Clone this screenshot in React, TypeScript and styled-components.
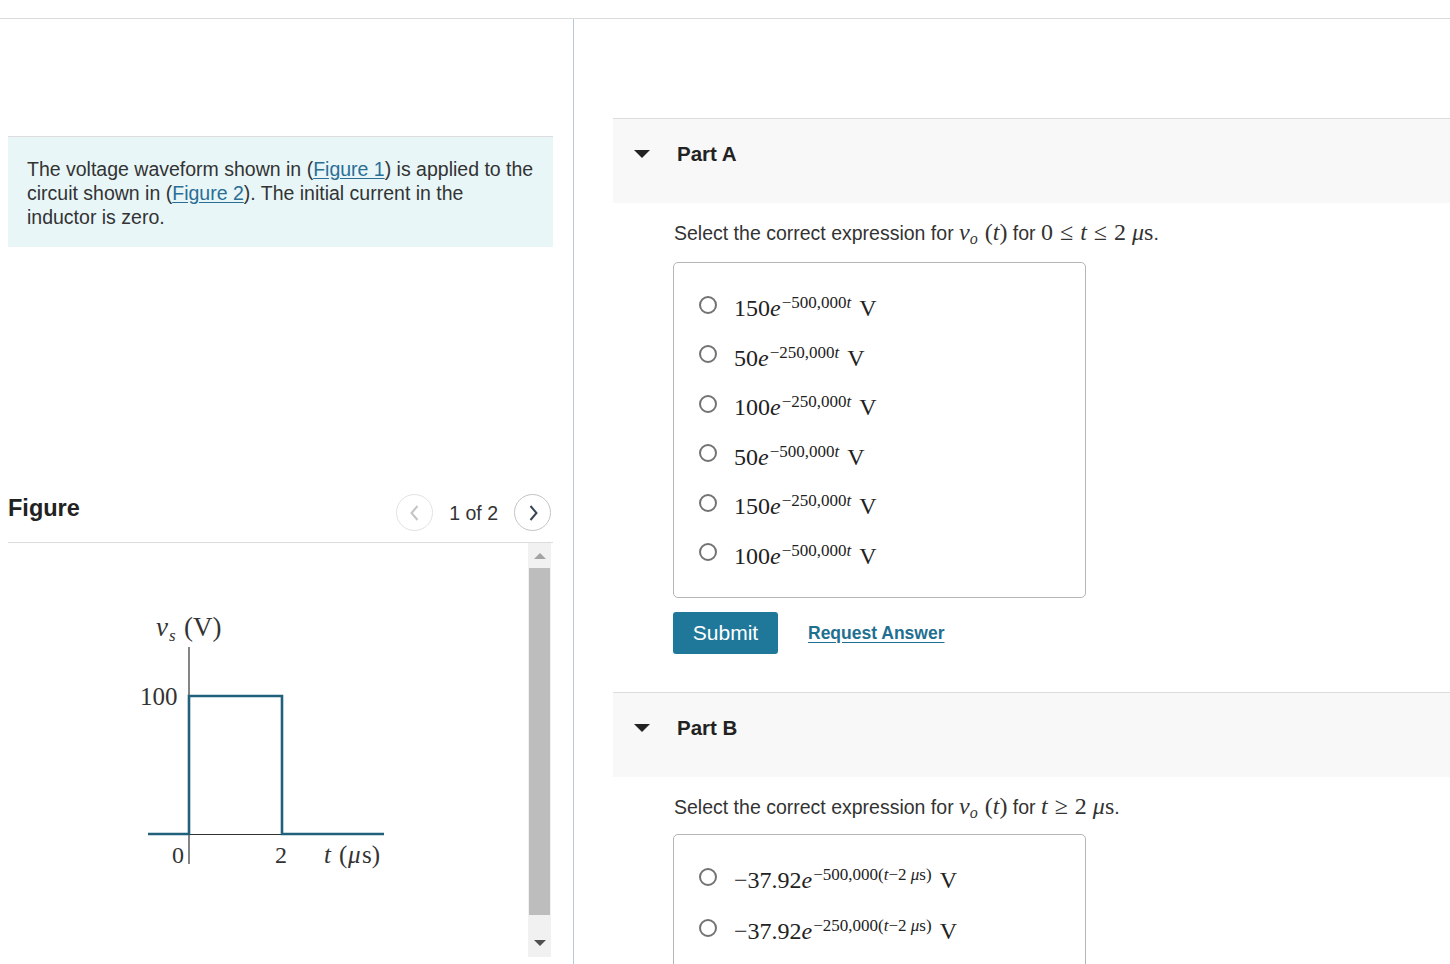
import React from "react";
import styled, { createGlobalStyle } from "styled-components";

const Global = createGlobalStyle`
  html, body { margin: 0; padding: 0; background: #fff; }
  body { font-family: "Liberation Sans", Arial, sans-serif; color: #333; }
  * { box-sizing: border-box; }
`;

const Page = styled.div`
  display: flex;
  flex-direction: column;
  height: 100vh;
  overflow: hidden;
`;

const TopBar = styled.div`
  height: 19px;
  flex: 0 0 19px;
  border-bottom: 1px solid #dcdcdc;
`;

const Columns = styled.div`
  flex: 1;
  display: flex;
  min-height: 0;
`;

const LeftPane = styled.div`
  width: 574px;
  flex: 0 0 574px;
  border-right: 1px solid #b9c8da;
  padding: 117px 20px 0 8px;
  display: flex;
  flex-direction: column;
  overflow: hidden;
`;

const InfoBox = styled.div`
  background: #e8f6f8;
  border-top: 1px solid #dcdcdc;
  padding: 20px 18px 18px 19px;
  font-size: 19.5px;
  line-height: 24px;
  color: #333;
`;

const Link = styled.a`
  color: #2a6e96;
  text-decoration: underline;
  text-underline-offset: 2px;
`;

const FigureHeader = styled.div`
  margin-top: 246px;
  height: 50px;
  flex: 0 0 50px;
  display: flex;
  align-items: flex-start;
  justify-content: space-between;
  border-bottom: 1px solid #dcdcdc;
  padding-right: 2px;
`;

const FigureTitle = styled.h2`
  margin: 0;
  font-size: 23.5px;
  line-height: 31px;
  font-weight: bold;
  color: #222;
`;

const Nav = styled.div`
  display: flex;
  align-items: center;
  gap: 16px;
  padding-top: 1px;
`;

const NavButton = styled.button<{ $disabled?: boolean }>`
  width: 37px;
  height: 37px;
  border-radius: 50%;
  border: 1px solid ${(p) => (p.$disabled ? "#e2e2e2" : "#c4c4c4")};
  background: #fff;
  display: flex;
  align-items: center;
  justify-content: center;
  padding: 0;
  color: ${(p) => (p.$disabled ? "#c4c4c4" : "#3a4655")};
`;

const NavText = styled.span`
  font-size: 19.5px;
  line-height: 24px;
  color: #333;
`;

const FigureBody = styled.div`
  height: 414px;
  flex: 0 0 414px;
  display: flex;
  padding-right: 2px;
`;

const GraphArea = styled.div`
  flex: 1;
`;

const Scrollbar = styled.div`
  width: 23px;
  background: #f1f1f1;
  display: flex;
  flex-direction: column;
  align-items: center;
`;

const ScrollArrow = styled.div<{ $down?: boolean }>`
  height: 25px;
  width: 100%;
  display: flex;
  align-items: center;
  justify-content: center;
  ${(p) => (p.$down ? "margin-top: auto; margin-bottom: 2px;" : "")}
  &::before {
    content: "";
    border-left: 6px solid transparent;
    border-right: 6px solid transparent;
    ${(p) =>
      p.$down
        ? "border-top: 6px solid #505050;"
        : "border-bottom: 6px solid #a3a3a3;"}
  }
`;

const ScrollThumb = styled.div`
  width: 21px;
  flex: 0 0 347px;
  background: #bdbdbd;
`;

const RightPane = styled.div`
  flex: 1;
  padding: 99px 0 0 39px;
  overflow: hidden;
`;

const PartHeader = styled.div`
  height: 85px;
  border-top: 1px solid #dcdcdc;
  background: #f8f8f8;
  display: flex;
  align-items: flex-start;
  padding: 23px 0 0 21px;
  gap: 27px;
`;

const Caret = styled.span`
  margin-top: 8px;
  width: 0;
  height: 0;
  border-left: 8px solid transparent;
  border-right: 8px solid transparent;
  border-top: 8px solid #222;
`;

const PartTitle = styled.h3`
  margin: 0;
  font-size: 20.5px;
  line-height: 24px;
  font-weight: bold;
  color: #222;
`;

const Question = styled.p`
  margin: 16px 0 0 61px;
  font-size: 19.5px;
  line-height: 26px;
  color: #333;
`;

const M = styled.span`
  font-family: "Liberation Serif", "Times New Roman", serif;
  font-size: 24px;
`;

const MI = styled.i`
  font-family: "Liberation Serif", "Times New Roman", serif;
  font-style: italic;
`;

const Rel = styled.span`
  margin: 0 7px;
`;

const Sub = styled.span`
  font-size: 16px;
  font-style: italic;
  vertical-align: -4px;
  margin-right: 7px;
`;

const OptionsBox = styled.div<{ $pt: number; $pb: number; $mt: number }>`
  margin: ${(p) => p.$mt}px 0 0 60px;
  width: 413px;
  border: 1px solid #b5b5b5;
  border-radius: 5px;
  padding: ${(p) => p.$pt}px 0 ${(p) => p.$pb}px;
`;

const OptionRow = styled.label<{ $h: number }>`
  height: ${(p) => p.$h}px;
  display: flex;
  align-items: center;
  padding-left: 25px;
  gap: 17px;
`;

const Radio = styled.span`
  width: 18px;
  height: 18px;
  flex: 0 0 18px;
  border: 2px solid #737373;
  border-radius: 50%;
  background: #fff;
`;

const Expr = styled.span`
  font-family: "Liberation Serif", "Times New Roman", serif;
  font-size: 24px;
  color: #222;
  white-space: nowrap;
  padding-top: 6px;
`;

const Sup = styled.span`
  font-size: 17px;
  vertical-align: 8px;
  margin-left: 1px;
`;

const Unit = styled.span`
  margin-left: 8px;
`;

const Actions = styled.div`
  margin: 14px 0 0 60px;
  display: flex;
  align-items: center;
  gap: 30px;
`;

const SubmitButton = styled.button`
  width: 105px;
  height: 42px;
  border: none;
  border-radius: 3px;
  background: #1f7899;
  color: #fff;
  font-family: "Liberation Sans", Arial, sans-serif;
  font-size: 21px;
`;

const RequestLink = styled.a`
  font-size: 17.5px;
  font-weight: bold;
  color: #1f6f91;
  text-decoration: underline;
  text-underline-offset: 3px;
`;

const PartBlock = styled.section<{ $mt: number }>`
  margin-top: ${(p) => p.$mt}px;
`;

const ChevronLeft = () => (
  <svg width="16" height="20" viewBox="0 0 16 20">
    <path d="M10.5 3 L4.5 10 L10.5 17" fill="none" stroke="currentColor" strokeWidth="2" />
  </svg>
);
const ChevronRight = () => (
  <svg width="16" height="20" viewBox="0 0 16 20">
    <path d="M5.5 3 L11.5 10 L5.5 17" fill="none" stroke="currentColor" strokeWidth="2" />
  </svg>
);

const Graph = () => (
  <svg width="518" height="413" viewBox="0 0 518 413">
    <g fontFamily="'Liberation Serif', 'Times New Roman', serif" fill="#333">
      <text x="148" y="93" fontSize="27" fontStyle="italic">v</text>
      <text x="161" y="98" fontSize="17" fontStyle="italic">s</text>
      <text x="176" y="93" fontSize="27">(V)</text>
      <text x="132" y="162" fontSize="25">100</text>
      <text x="164" y="320" fontSize="24">0</text>
      <text x="267" y="320" fontSize="24">2</text>
      <text x="316" y="320" fontSize="25" fontStyle="italic">t</text>
      <text x="331" y="320" fontSize="25">(</text>
      <text x="340" y="320" fontSize="25" fontStyle="italic">μ</text>
      <text x="354" y="320" fontSize="25">s)</text>
    </g>
    <line x1="181" y1="104" x2="181" y2="321" stroke="#333" strokeWidth="1.2" />
    <line x1="181" y1="291.5" x2="274" y2="291.5" stroke="#333" strokeWidth="1.2" />
    <polyline
      points="140,291 181,291 181,153 274,153 274,291 376,291"
      fill="none"
      stroke="#22617b"
      strokeWidth="2.6"
    />
  </svg>
);

type Opt = { coef: string; exp: string };

const partA: Opt[] = [
  { coef: "150", exp: "500,000" },
  { coef: "50", exp: "250,000" },
  { coef: "100", exp: "250,000" },
  { coef: "50", exp: "500,000" },
  { coef: "150", exp: "250,000" },
  { coef: "100", exp: "500,000" },
];

const OptionA = ({ o }: { o: Opt }) => (
  <OptionRow $h={49.5}>
    <Radio />
    <Expr>
      {o.coef}
      <i>e</i>
      <Sup>
        −{o.exp}
        <i>t</i>
      </Sup>
      <Unit>V</Unit>
    </Expr>
  </OptionRow>
);

const OptionB = ({ rate }: { rate: string }) => (
  <OptionRow $h={51}>
    <Radio />
    <Expr>
      −37.92<i>e</i>
      <Sup>
        −{rate}(<i>t</i>−2 <i>μ</i>s)
      </Sup>
      <Unit>V</Unit>
    </Expr>
  </OptionRow>
);

const VoT = () => (
  <M>
    <MI>v</MI>
    <Sub>o</Sub>(<MI>t</MI>)
  </M>
);

export default function App() {
  return (
    <Page>
      <Global />
      <TopBar />
      <Columns>
        <LeftPane>
          <InfoBox>
            The voltage waveform shown in (<Link href="#">Figure 1</Link>) is applied to the
            circuit shown in (<Link href="#">Figure 2</Link>). The initial current in the
            inductor is zero.
          </InfoBox>
          <FigureHeader>
            <FigureTitle>Figure</FigureTitle>
            <Nav>
              <NavButton $disabled aria-label="previous">
                <ChevronLeft />
              </NavButton>
              <NavText>1 of 2</NavText>
              <NavButton aria-label="next">
                <ChevronRight />
              </NavButton>
            </Nav>
          </FigureHeader>
          <FigureBody>
            <GraphArea>
              <Graph />
            </GraphArea>
            <Scrollbar>
              <ScrollArrow />
              <ScrollThumb />
              <ScrollArrow $down />
            </Scrollbar>
          </FigureBody>
        </LeftPane>
        <RightPane>
          <PartBlock $mt={0}>
            <PartHeader>
              <Caret />
              <PartTitle>Part A</PartTitle>
            </PartHeader>
            <Question>
              Select the correct expression for <VoT /> for{" "}
              <M>
                0<Rel>≤</Rel>
                <MI>t</MI>
                <Rel>≤</Rel>2 <MI>μ</MI>s
              </M>
              .
            </Question>
            <OptionsBox $mt={10} $pt={17} $pb={20}>
              {partA.map((o, i) => (
                <OptionA key={i} o={o} />
              ))}
            </OptionsBox>
            <Actions>
              <SubmitButton>Submit</SubmitButton>
              <RequestLink href="#">Request Answer</RequestLink>
            </Actions>
          </PartBlock>
          <PartBlock $mt={38}>
            <PartHeader>
              <Caret />
              <PartTitle>Part B</PartTitle>
            </PartHeader>
            <Question>
              Select the correct expression for <VoT /> for{" "}
              <M>
                <MI>t</MI>
                <Rel>≥</Rel>2 <MI>μ</MI>s
              </M>
              .
            </Question>
            <OptionsBox $mt={8} $pt={16} $pb={20}>
              <OptionB rate="500,000" />
              <OptionB rate="250,000" />
            </OptionsBox>
          </PartBlock>
        </RightPane>
      </Columns>
    </Page>
  );
}
